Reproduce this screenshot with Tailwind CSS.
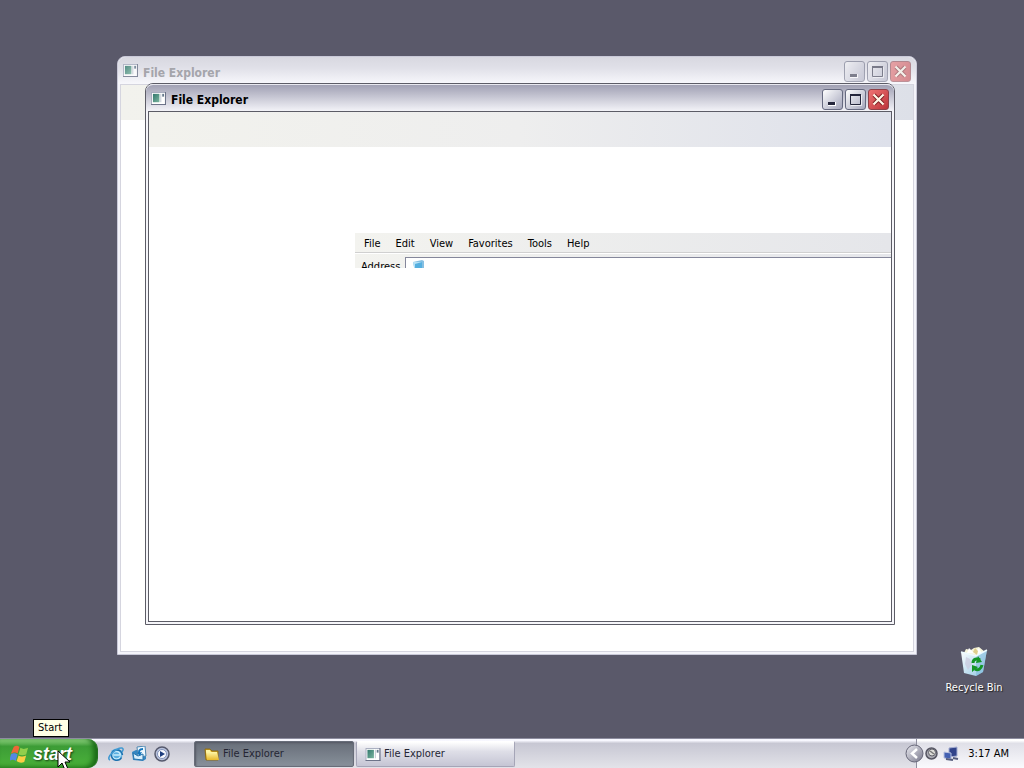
<!DOCTYPE html>
<html lang="en">
<head>
<meta charset="utf-8">
<title>Desktop</title>
<script src="https://cdn.jsdelivr.net/npm/@tailwindcss/browser@4"></script>
</head>
<body class="flex h-screen flex-col overflow-hidden bg-[#5a596a] font-['DejaVu_Sans_Condensed','DejaVu_Sans',sans-serif] text-[11px] leading-4 text-black">
<svg class="absolute size-0" aria-hidden="true">
  <defs>
    <linearGradient id="teal" x2="1" y2="1"><stop stop-color="#32786d"/><stop offset="1" stop-color="#7bb5a0"/></linearGradient>
    <linearGradient id="folder" x2="0" y2="1"><stop stop-color="#fff7a8"/><stop offset="1" stop-color="#e8b92c"/></linearGradient>
    <linearGradient id="glass" x2="1" y2="1"><stop stop-color="#ffffff"/><stop offset="1" stop-color="#8fc6e4"/></linearGradient>
    <linearGradient id="ball" x2="1" y2="1"><stop stop-color="#ececf2"/><stop offset="1" stop-color="#77778a"/></linearGradient>
  </defs>
  <symbol id="app" viewBox="0 0 16 14">
    <rect x=".5" y=".5" width="15" height="13" fill="#fff" stroke="#a5aabd"/>
    <path d="M0 13.500h16M15.500 0v14" stroke="#666c82"/>
    <rect x="2" y="2" width="7" height="9" fill="url(#teal)"/>
    <path d="M10 2h1v9h-1z" fill="#bcc4cf"/><path d="M12 2h2v3h-2z" fill="#65798c"/>
  </symbol>
  <symbol id="min" viewBox="0 0 19 19"><path d="M5 12h8v4H5z" fill="#fff"/><path d="M5 12h7v3H5z" fill="#25273c"/></symbol>
  <symbol id="max" viewBox="0 0 19 19"><path d="M4.500 4.500h10v10h-10z" fill="none" stroke="#25273c"/><path d="M4 5h11" stroke="#25273c" stroke-width="2"/><path d="M15.500 5v10.500H5" fill="none" stroke="#fff" opacity=".7"/></symbol>
  <symbol id="close" viewBox="0 0 19 19"><path d="m5 5 9 9m0-9-9 9" stroke="#7e2024" stroke-width="4"/><path d="m4.500 4.500 10 10m0-10-10 10" stroke="#fff8e8" stroke-width="2.200"/></symbol>
</svg>

<main class="relative flex-1">
  <!-- Inactive window -->
  <section class="absolute top-[56px] left-[117px] flex h-[599px] w-[800px] flex-col rounded-t-lg border border-[#c9c9d8] bg-[#f4f4fa] px-[2px] pb-[2px]">
    <header class="-mx-[2px] flex h-[27px] shrink-0 items-center gap-[5px] rounded-t-lg bg-linear-to-b from-[#d8d8e0] via-[#e0e0e8] via-40% to-[#f8f8fc] px-[5px]">
      <svg class="h-[13px] w-[15px] opacity-80"><use href="#app"/></svg>
      <h2 class="flex-1 pt-1 text-[12px] font-bold text-[#a5a5ab]">File Explorer</h2>
      <div class="flex gap-[2px] pt-[2px] opacity-55">
        <button aria-label="Minimize" class="size-[21px] rounded-[3px] border border-[#666a80] bg-linear-to-br from-white to-[#a4a6bb]"><svg class="size-[19px]"><use href="#min"/></svg></button>
        <button aria-label="Maximize" class="size-[21px] rounded-[3px] border border-[#666a80] bg-linear-to-br from-white to-[#a4a6bb]"><svg class="size-[19px]"><use href="#max"/></svg></button>
        <button aria-label="Close" class="size-[21px] rounded-[3px] border border-[#8f4249] bg-linear-to-br from-[#ee7272] to-[#bc333b]"><svg class="size-[19px]"><use href="#close"/></svg></button>
      </div>
    </header>
    <div class="flex-1 border border-[#d5d5df] bg-white">
      <div class="h-[35px] bg-linear-to-r from-[#f2f2ed] via-[#eeeeee] to-[#dde0e8]"></div>
    </div>
  </section>

  <!-- Active window -->
  <section class="absolute top-[83px] left-[145px] flex h-[542px] w-[750px] flex-col rounded-t-lg border border-[#5c5c66] bg-[#f5f5f9] px-[2px] pb-[2px]">
    <header class="-mx-[2px] flex h-[27px] shrink-0 items-center gap-[5px] rounded-t-[7px] border-t border-[#e8e8f0] bg-linear-to-b from-[#a1a1b4] via-[#d2d2dd] via-60% to-[#f3f3f8] px-[5px]">
      <svg class="h-[13px] w-[15px]"><use href="#app"/></svg>
      <h2 class="flex-1 pt-1 text-[12px] font-bold">File Explorer</h2>
      <div class="flex gap-[2px] pt-[2px]">
        <button aria-label="Minimize" class="size-[21px] rounded-[3px] border border-[#666a80] bg-linear-to-br from-white to-[#a4a6bb]"><svg class="size-[19px]"><use href="#min"/></svg></button>
        <button aria-label="Maximize" class="size-[21px] rounded-[3px] border border-[#666a80] bg-linear-to-br from-white to-[#a4a6bb]"><svg class="size-[19px]"><use href="#max"/></svg></button>
        <button aria-label="Close" class="size-[21px] rounded-[3px] border border-[#8f4249] bg-linear-to-br from-[#ee7272] to-[#bc333b]"><svg class="size-[19px]"><use href="#close"/></svg></button>
      </div>
    </header>
    <div class="flex-1 border border-[#5c5c66] bg-white">
      <div class="h-[35px] bg-linear-to-r from-[#f2f2ed] via-[#eeeeee] to-[#dde0ea]"></div>
      <div class="mt-[86px] ml-[206px] h-[35px] overflow-hidden bg-linear-to-r from-[#f3f3ef] to-[#e5e6ea]">
        <nav class="flex h-5 items-center gap-[15px] border-b border-[#d0d0d0] px-[9px] pt-[2px]">
          <button>File</button><button>Edit</button><button>View</button><button>Favorites</button><button>Tools</button><button>Help</button>
        </nav>
        <div class="flex h-[22px] border-t border-white pt-[3px]">
          <label for="address" class="w-[50px] shrink-0 pt-[2px] pl-[6px]">Address</label>
          <div class="flex h-5 flex-1 items-start border-t border-l border-[#85879b] bg-white pt-[2px] pl-[6px]">
            <svg class="size-[13px] shrink-0" viewBox="0 0 13 13"><path d="m1 2 9-2 2 1v11H3z" fill="#85bfe2"/><path d="M1 2h9v10H3z" fill="#b5e1f6"/><path d="m3 4 7-2v8H3z" fill="#55afdf"/></svg>
            <input id="address" type="text" class="min-w-0 flex-1 bg-transparent outline-none">
          </div>
        </div>
      </div>
    </div>
  </section>

  <a href="#recycle" class="absolute right-[13px] bottom-[42px] flex w-[74px] flex-col items-center gap-[3px] text-white">
    <svg class="size-[32px]" viewBox="0 0 32 32">
      <path d="m6 8 2-4 5 1 3-2 5-1 6 5-3 5H7z" fill="#f6f5db"/><path d="m9 8 2-5 5 5 5-5 3 6z" fill="#fff"/><path d="m15 7 2-4 3 3-1 4z" fill="#e0cf8c"/>
      <path d="M3 7 18 11 29 5 25 27 18 31 6 28z" fill="url(#glass)"/>
      <path d="m18 11 11-6-4 22-7 4z" fill="#7fb9dc" opacity=".55"/>
      <path d="m3 7 15 4 11-6" fill="none" stroke="#edfaff" stroke-width="1.500"/>
      <path d="m8 12 4 2 2 5-4 6-3-6z" fill="#c9c8dc" opacity=".7"/>
      <g fill="none" stroke="#139526" stroke-width="3"><path d="M15 18c0-4 4-5 7-3M24 20c-1 4-4 6-7 4"/></g>
      <path d="m20 11 4 6-6 1zM14 27v-7l6 2z" fill="#139526"/>
    </svg>
    <span class="[text-shadow:1px_1px_1px_#222]">Recycle Bin</span>
  </a>

  <div role="tooltip" class="absolute bottom-px left-[33px] z-10 border border-black bg-[#ffffe5] pr-[6px] pl-1">Start</div>
</main>

<footer class="flex h-[30px] shrink-0 border-t border-[#8d8d9f] bg-linear-to-b from-[#f8f8ff] from-5% via-[#c7c7d3] via-15% to-[#e3e3e9]">
  <button class="relative flex w-[98px] shrink-0 items-center gap-1 rounded-r-[10px] border-r border-[#247021] bg-linear-to-b from-[#95da86] via-[#3c9c36] via-25% to-[#4cb33a] pl-[10px] font-['Liberation_Sans',sans-serif] text-[18px] font-bold text-white italic shadow-[inset_-4px_-1px_5px_#1a6b16]">
    <svg class="size-[19px] shrink-0" viewBox="0 0 20 20"><path d="M4 3c3-2 4-1 6 0L8 10c-3-2-4-1-7 0z" fill="#ed6737"/><path d="M11 4c3 2 5 1 8 0l-2 7c-3 1-5 1-8 0z" fill="#91cf4c"/><path d="M1 11c3-2 5-1 7 0l-2 7c-2-2-4-2-7 0z" fill="#5488e2"/><path d="M9 12c3 2 5 1 8 0l-2 7c-3 1-5 1-8-1z" fill="#fbce43"/></svg>
    <span class="[text-shadow:1px_1px_2px_#163f12]">start</span>
    <svg class="absolute top-[11px] left-[57px] h-[21px] w-[13px]" viewBox="0 0 13 21"><path d="M1 1v16l4-4 3 7 3-1-3-7h5z" fill="#fff" stroke="#000"/></svg>
  </button>
  <nav class="flex w-[96px] shrink-0 items-center gap-[7px] pl-[10px]" aria-label="Quick launch">
    <button aria-label="Internet"><svg class="size-4" viewBox="0 0 16 16"><circle cx="8.500" cy="8.500" r="6" fill="#5aaee0"/><path d="M12.500 10.500c-2 4-8 3-8-1.500s7-5 8 0h-7" fill="none" stroke="#c6ebfc" stroke-width="1.500"/><path d="M13.500 11.500c-2 4-10 4-10-2.500s10-7 11 0" fill="none" stroke="#1c70ad" stroke-width="1.500"/><path d="M2 14C-3 12 9 1 14 2c2 1 1 2 0 4" fill="none" stroke="#4199d2" stroke-width="1.500"/></svg></button>
    <button aria-label="Mail"><svg class="size-4" viewBox="0 0 16 16"><path d="m1 6 4-2 10 1v8l-3 2-10-1z" fill="#3587c2"/><path d="m6 1 8-1 1 10-8 1z" fill="#eef8ff" stroke="#4d86b0"/><path d="m2 7 5 3 5-2v6l-9-1z" fill="#d9effc" stroke="#2874ac"/><path d="M12 3C8 3 7 6 9 8" stroke="#1676bc" stroke-width="2" fill="none"/><path d="m6 7 5-1-2 4z" fill="#1676bc"/></svg></button>
    <button aria-label="Media player"><svg class="size-4" viewBox="0 0 16 16"><circle cx="8" cy="8" r="7" fill="#b9c2dc" stroke="#55596d" stroke-width="1.500"/><circle cx="8" cy="8" r="4.500" fill="#f9faff" stroke="#8394bb"/><path d="m6 5 5 3-5 3z" fill="#1d3d7e"/></svg></button>
  </nav>
  <div class="flex min-w-0 flex-1 gap-[2px] pt-[2px] pb-px text-[#252634]">
    <button class="flex w-[160px] items-center gap-[3px] rounded-[2px] border border-[#686d79] bg-linear-to-b from-[#686e79] to-[#87909a] pl-[9px] shadow-[inset_1px_1px_2px_#545864]">
      <svg class="size-4 shrink-0" viewBox="0 0 16 16"><path d="M1 3h5l2 2h6v9H2z" fill="#d5a621" stroke="#8d6d17"/><path d="M2 6h11l2 8H3z" fill="url(#folder)"/><path d="M2 4h4l1 2H2z" fill="#fff6a4"/></svg>
      File Explorer
    </button>
    <button class="flex w-[159px] items-center gap-[3px] rounded-[2px] border border-[#a5a5b7] border-t-white bg-linear-to-b from-white via-[#dedee7] via-40% to-[#c5c5d4] pl-[8px]">
      <svg class="h-[13px] w-4 shrink-0"><use href="#app"/></svg>
      File Explorer
    </button>
  </div>
  <div class="flex w-[119px] shrink-0 items-center">
    <button aria-label="Show hidden icons" class="relative z-10"><svg class="size-[19px]" viewBox="0 0 19 19"><circle cx="9.500" cy="9.500" r="8.500" fill="url(#ball)" stroke="#666678"/><path d="m12 5-5 4.500 5 4.500" stroke="#fff" stroke-width="2.500" fill="none"/></svg></button>
    <div class="-ml-2 flex h-full flex-1 items-center gap-1 border-l border-[#8e8e9e] bg-linear-to-b from-white from-5% via-[#e0e0e8] via-15% to-[#fafafd] pr-[15px] pl-[6px]">
      <svg class="size-4 shrink-0" viewBox="0 0 16 16"><circle cx="8.500" cy="7.500" r="5.500" fill="#aaaab2" stroke="#555562" stroke-width="1.500"/><circle cx="9" cy="6.500" r="3.500" fill="#deded9" stroke="#60606a"/><path d="m7 5 4 3" stroke="#777" stroke-width="1.500"/></svg>
      <svg class="size-4 shrink-0" viewBox="0 0 16 16"><path d="m6 2 8-1v9l-8 1z" fill="#31438a" stroke="#a4add1"/><path d="m1 6 7 1v6l-7-1z" fill="#4360b2" stroke="#bac3e0"/><path d="m3 13 7 1m0-2 5 1" stroke="#565d7e" stroke-width="2"/></svg>
      <time class="ml-auto whitespace-nowrap">3:17 AM</time>
    </div>
  </div>
</footer>
</body>
</html>
